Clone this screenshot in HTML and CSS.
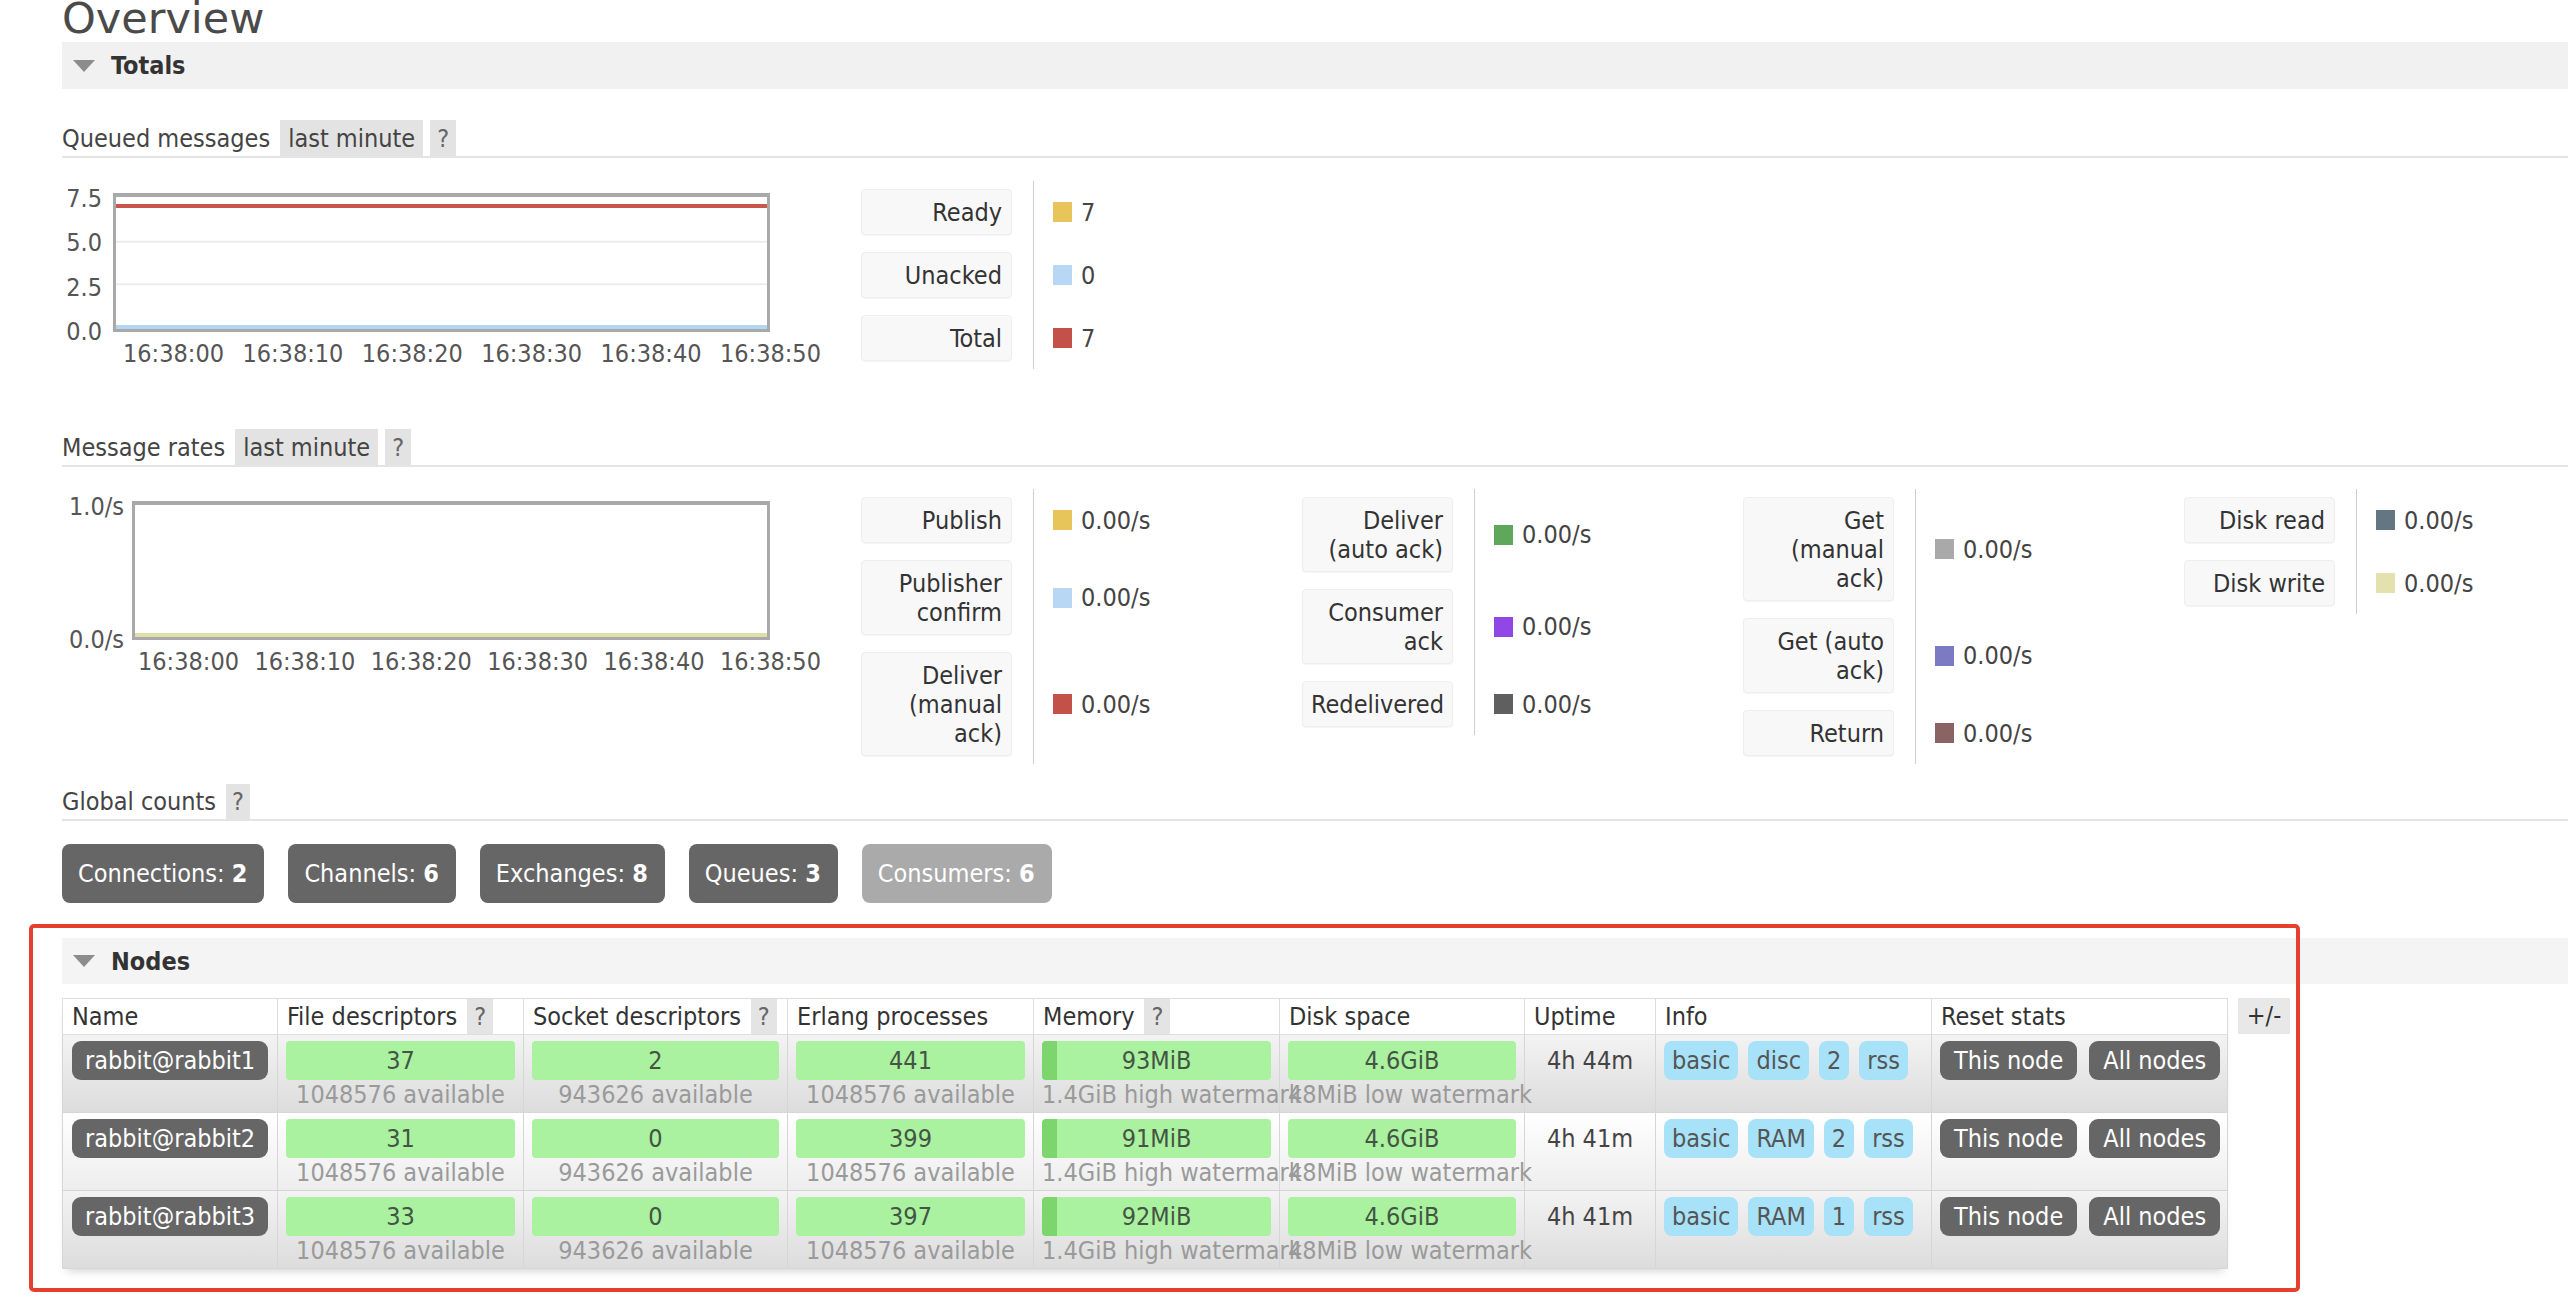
FILE: index.html
```html
<!DOCTYPE html>
<html>
<head>
<meta charset="utf-8">
<title>Overview</title>
<link rel="stylesheet" href="styles.css">
</head>
<body>
<div class="page">
  <h1 class="title">Overview</h1>

  <div class="section-bar totals-bar">
    <svg class="tri" viewBox="0 0 22 12"><polygon points="0,0 22,0 11,12"/></svg>
    <span>Totals</span>
  </div>

  <div class="subhead sh1"><span>Queued messages</span><span class="tag">last minute</span><span class="tag q">?</span></div>

  <div class="chart-row row1">
    <div class="chart c1">
      <div class="yaxis"><span>7.5</span><span>5.0</span><span>2.5</span><span>0.0</span></div>
      <div class="plotcol">
        <div class="plot">
          <svg viewBox="0 0 651 133" preserveAspectRatio="none">
            <line x1="0" y1="45" x2="651" y2="45" stroke="#ededed" stroke-width="2"/>
            <line x1="0" y1="88" x2="651" y2="88" stroke="#ededed" stroke-width="2"/>
            <line x1="0" y1="9" x2="651" y2="9" stroke="#edc240" stroke-width="4"/>
            <line x1="0" y1="9" x2="651" y2="9" stroke="#c9564b" stroke-width="4"/>
            <line x1="0" y1="131" x2="651" y2="131" stroke="#b3d6f2" stroke-width="4"/>
          </svg>
        </div>
        <div class="xaxis"><span>16:38:00</span><span>16:38:10</span><span>16:38:20</span><span>16:38:30</span><span>16:38:40</span><span>16:38:50</span></div>
      </div>
    </div>
    <div class="legend">
      <div class="sep s3"></div>
      <div class="lbl">Ready</div><div class="val"><i class="sw c-yellow"></i>7</div>
      <div class="lbl">Unacked</div><div class="val"><i class="sw c-lblue"></i>0</div>
      <div class="lbl">Total</div><div class="val"><i class="sw c-red"></i>7</div>
    </div>
  </div>

  <div class="subhead sh2"><span>Message rates</span><span class="tag">last minute</span><span class="tag q">?</span></div>

  <div class="chart-row row2">
    <div class="chart c2">
      <div class="yaxis"><span>1.0/s</span><span>0.0/s</span></div>
      <div class="plotcol">
        <div class="plot">
          <svg viewBox="0 0 632 133" preserveAspectRatio="none">
            <line x1="0" y1="131" x2="632" y2="131" stroke="#dfdfa9" stroke-width="4"/>
          </svg>
        </div>
        <div class="xaxis"><span>16:38:00</span><span>16:38:10</span><span>16:38:20</span><span>16:38:30</span><span>16:38:40</span><span>16:38:50</span></div>
      </div>
    </div>
    <div class="legend">
      <div class="sep s3"></div>
      <div class="lbl">Publish</div><div class="val"><i class="sw c-yellow"></i>0.00/s</div>
      <div class="lbl">Publisher confirm</div><div class="val"><i class="sw c-lblue"></i>0.00/s</div>
      <div class="lbl">Deliver (manual ack)</div><div class="val"><i class="sw c-red"></i>0.00/s</div>
    </div>
    <div class="legend">
      <div class="sep s3"></div>
      <div class="lbl">Deliver (auto ack)</div><div class="val"><i class="sw c-green"></i>0.00/s</div>
      <div class="lbl">Consumer ack</div><div class="val"><i class="sw c-purple"></i>0.00/s</div>
      <div class="lbl">Redelivered</div><div class="val"><i class="sw c-dgray"></i>0.00/s</div>
    </div>
    <div class="legend">
      <div class="sep s3"></div>
      <div class="lbl">Get (manual ack)</div><div class="val"><i class="sw c-gray"></i>0.00/s</div>
      <div class="lbl">Get (auto ack)</div><div class="val"><i class="sw c-violet"></i>0.00/s</div>
      <div class="lbl">Return</div><div class="val"><i class="sw c-brown"></i>0.00/s</div>
    </div>
    <div class="legend">
      <div class="sep s2"></div>
      <div class="lbl">Disk read</div><div class="val"><i class="sw c-slate"></i>0.00/s</div>
      <div class="lbl">Disk write</div><div class="val"><i class="sw c-khaki"></i>0.00/s</div>
    </div>
  </div>

  <div class="subhead sh3"><span>Global counts</span><span class="tag q">?</span></div>

  <div class="counts">
    <span class="count">Connections:&nbsp;<b>2</b></span>
    <span class="count">Channels:&nbsp;<b>6</b></span>
    <span class="count">Exchanges:&nbsp;<b>8</b></span>
    <span class="count">Queues:&nbsp;<b>3</b></span>
    <span class="count light">Consumers:&nbsp;<b>6</b></span>
  </div>

  <div class="section-bar nodes-bar">
    <svg class="tri" viewBox="0 0 22 12"><polygon points="0,0 22,0 11,12"/></svg>
    <span>Nodes</span>
  </div>

  <div class="nodes">
    <table class="list">
      <colgroup>
        <col class="w-name"><col class="w-fd"><col class="w-sd"><col class="w-ep"><col class="w-mem"><col class="w-disk"><col class="w-up"><col class="w-info"><col class="w-reset">
      </colgroup>
      <thead>
        <tr>
          <th>Name</th>
          <th>File descriptors<span class="hq">?</span></th>
          <th>Socket descriptors<span class="hq">?</span></th>
          <th>Erlang processes</th>
          <th>Memory<span class="hq">?</span></th>
          <th>Disk space</th>
          <th>Uptime</th>
          <th>Info</th>
          <th>Reset stats</th>
        </tr>
      </thead>
      <tbody>
        <tr class="alt1">
          <td class="name"><span class="pill">rabbit@rabbit1</span></td>
          <td><div class="bar">37</div><div class="sub">1048576 available</div></td>
          <td><div class="bar">2</div><div class="sub">943626 available</div></td>
          <td><div class="bar">441</div><div class="sub">1048576 available</div></td>
          <td><div class="bar mem">93MiB</div><div class="sub">1.4GiB high watermark</div></td>
          <td><div class="bar">4.6GiB</div><div class="sub">48MiB low watermark</div></td>
          <td class="up">4h 44m</td>
          <td><div class="badges"><span>basic</span><span>disc</span><span>2</span><span>rss</span></div></td>
          <td><div class="btns"><span>This node</span><span>All nodes</span></div></td>
        </tr>
        <tr class="alt2">
          <td class="name"><span class="pill">rabbit@rabbit2</span></td>
          <td><div class="bar">31</div><div class="sub">1048576 available</div></td>
          <td><div class="bar">0</div><div class="sub">943626 available</div></td>
          <td><div class="bar">399</div><div class="sub">1048576 available</div></td>
          <td><div class="bar mem">91MiB</div><div class="sub">1.4GiB high watermark</div></td>
          <td><div class="bar">4.6GiB</div><div class="sub">48MiB low watermark</div></td>
          <td class="up">4h 41m</td>
          <td><div class="badges"><span>basic</span><span>RAM</span><span>2</span><span>rss</span></div></td>
          <td><div class="btns"><span>This node</span><span>All nodes</span></div></td>
        </tr>
        <tr class="alt1">
          <td class="name"><span class="pill">rabbit@rabbit3</span></td>
          <td><div class="bar">33</div><div class="sub">1048576 available</div></td>
          <td><div class="bar">0</div><div class="sub">943626 available</div></td>
          <td><div class="bar">397</div><div class="sub">1048576 available</div></td>
          <td><div class="bar mem">92MiB</div><div class="sub">1.4GiB high watermark</div></td>
          <td><div class="bar">4.6GiB</div><div class="sub">48MiB low watermark</div></td>
          <td class="up">4h 41m</td>
          <td><div class="badges"><span>basic</span><span>RAM</span><span>1</span><span>rss</span></div></td>
          <td><div class="btns"><span>This node</span><span>All nodes</span></div></td>
        </tr>
      </tbody>
    </table>
    <div class="plusminus">+/-</div>
  </div>

  <div class="annot"></div>
</div>
</body>
</html>
```

FILE: styles.css
```css
* { box-sizing: border-box; }

html, body {
  margin: 0;
  background: #fff;
}

body {
  font-family: "DejaVu Sans Condensed", "DejaVu Sans", sans-serif;
  font-stretch: condensed;
  font-size: 25px;
  line-height: 29px;
  color: #444;
}

.page {
  position: relative;
  padding-left: 62px;
  height: 1296px;
  overflow: hidden;
  display: flow-root;
}

.title {
  font-family: "DejaVu Sans", sans-serif;
  font-stretch: normal;
  font-weight: normal;
  font-size: 43px;
  line-height: 36px;
  height: 36px;
  margin: 0 0 6px;
  color: #4a4a4a;
}

.section-bar {
  display: flex;
  align-items: center;
  background: #f1f1f1;
  padding-left: 11px;
  font-weight: bold;
  color: #333;
}

.totals-bar { height: 47px; }

.nodes-bar {
  height: 46px;
  margin-top: 35px;
  background: #f4f4f4;
}

.tri {
  width: 22px;
  height: 12px;
  margin-right: 16px;
  fill: #8c8c8c;
}

.subhead {
  display: flex;
  align-items: center;
  height: 38px;
  border-bottom: 2px solid #e4e4e4;
  color: #444;
}

.sh1 { margin-top: 31px; }
.sh2 { margin-top: 60px; }
.sh3 { margin-top: 20px; height: 37px; }

.tag {
  align-self: stretch;
  display: flex;
  align-items: center;
  background: #e3e3e3;
  padding: 0 8px;
  margin-left: 10px;
}

.tag.q {
  margin-left: 7px;
  padding: 0 7px;
  color: #666;
}

.sh3 .tag.q { margin-left: 10px; padding: 0 6px; }

/* charts */
.chart-row {
  display: flex;
  align-items: flex-start;
}

.row1 { margin-top: 23px; }
.row2 { margin-top: 22px; }

.chart {
  display: flex;
  align-items: flex-start;
  width: 799px;
  flex: none;
  color: #555;
}

.yaxis {
  display: flex;
  flex-direction: column;
  justify-content: space-between;
  align-items: flex-end;
  margin-top: 3px;
  height: 162px;
  flex: none;
}

.c1 .yaxis { width: 51px; padding-right: 11px; }
.c2 .yaxis { width: 70px; padding-right: 8px; }

.plotcol {
  display: flex;
  flex-direction: column;
  margin-top: 12px;
}

.plot {
  height: 139px;
  border: 3px solid #a9a9a9;
  border-top-width: 4px;
  background: #fff;
}

.plot svg {
  display: block;
  width: 100%;
  height: 100%;
}

.c1 .plot { width: 657px; }
.c2 .plot { width: 638px; }

.xaxis {
  display: flex;
  justify-content: space-between;
  margin-top: 7px;
  white-space: nowrap;
}

.c1 .xaxis { width: 698px; margin-left: 10px; }
.c2 .xaxis { width: 683px; margin-left: 6px; }

/* legends */
.legend {
  display: grid;
  grid-template-columns: 151px 41px auto;
  row-gap: 17px;
  align-items: center;
  padding: 8px 0;
  width: 441px;
  flex: none;
}

.sep {
  grid-column: 2;
  align-self: stretch;
  justify-self: start;
  width: 1px;
  background: #cfcfcf;
  margin: -8px 0 -8px 21px;
}

.s3 { grid-row: 1 / span 3; }
.s2 { grid-row: 1 / span 2; }

.lbl {
  grid-column: 1;
  align-self: start;
  background: #f8f8f8;
  border: 1px solid #eee;
  border-radius: 4px;
  box-shadow: 0 1px 1px rgba(0, 0, 0, 0.04);
  text-align: right;
  padding: 8px 9px 7px 8px;
  color: #333;
}

.val {
  grid-column: 3;
  display: flex;
  align-items: center;
  color: #444;
  white-space: nowrap;
}

.sw {
  display: inline-block;
  width: 19px;
  height: 20px;
  margin-right: 9px;
}

.c-yellow { background: #e8c55a; }
.c-lblue  { background: #b7d7f4; }
.c-red    { background: #c4504a; }
.c-green  { background: #5fa75a; }
.c-purple { background: #9146e6; }
.c-dgray  { background: #5f5f5f; }
.c-gray   { background: #a9a9a9; }
.c-violet { background: #7d7ac4; }
.c-brown  { background: #8a6462; }
.c-slate  { background: #647681; }
.c-khaki  { background: #e3e1ae; }

/* global counts */
.counts {
  display: flex;
  gap: 24px;
  margin-top: 23px;
}

.count {
  display: flex;
  align-items: center;
  height: 59px;
  padding: 0 17px 0 16px;
  background: #666;
  color: #fff;
  border-radius: 8px;
  white-space: nowrap;
}

.count.light { background: #aaa; }

/* nodes table */
.nodes {
  display: flex;
  align-items: flex-start;
  margin-top: 14px;
}

.list {
  width: 2165px;
  table-layout: fixed;
  border-collapse: collapse;
  flex: none;
  box-shadow: 0 7px 9px -5px rgba(0, 0, 0, 0.18);
}

.w-name  { width: 215px; }
.w-fd    { width: 246px; }
.w-sd    { width: 264px; }
.w-ep    { width: 246px; }
.w-mem   { width: 246px; }
.w-disk  { width: 245px; }
.w-up    { width: 131px; }
.w-info  { width: 276px; }
.w-reset { width: 296px; }

.list th {
  height: 36px;
  padding: 0 0 0 9px;
  text-align: left;
  font-weight: normal;
  color: #333;
  background: #fff;
  border: 1px solid #ddd;
  line-height: 35px;
  white-space: nowrap;
  vertical-align: top;
}

.hq {
  display: inline-block;
  background: #e4e4e4;
  color: #666;
  padding: 0 7px;
  margin-left: 10px;
  line-height: 35px;
  vertical-align: top;
}

.list td {
  height: 78px;
  padding: 6px 8px 0;
  vertical-align: top;
  border: 1px solid #d6d6d6;
}

.list td.name { padding-left: 9px; }

.alt1 { background: linear-gradient(#f3f3f3, #dcdcdc); }
.alt2 { background: linear-gradient(#ffffff, #ededed); }

.pill {
  display: inline-block;
  height: 39px;
  line-height: 39px;
  padding: 0 13px;
  background: #666;
  color: #fff;
  border-radius: 9px;
  white-space: nowrap;
}

.bar {
  height: 39px;
  line-height: 39px;
  text-align: center;
  background: #aaf1a0;
  border-radius: 4px;
  color: #454;
}

.bar.mem {
  background: linear-gradient(to right, #7dd56e 0, #7dd56e 15px, #aaf1a0 15px);
}

.sub {
  text-align: center;
  color: #9a9a9a;
  white-space: nowrap;
  line-height: 29px;
}

.list td.up {
  text-align: center;
  line-height: 39px;
  color: #444;
  white-space: nowrap;
}

.badges, .btns {
  display: flex;
  white-space: nowrap;
}

.badges { gap: 10px; }
.btns { gap: 12px; }

.badges span {
  height: 39px;
  line-height: 39px;
  padding: 0 8px;
  background: #a8e2f8;
  border-radius: 8px;
  color: #555;
}

.btns span {
  height: 39px;
  line-height: 39px;
  padding: 0 14px;
  background: #666;
  color: #fff;
  border-radius: 9px;
}

.plusminus {
  margin-left: 10px;
  width: 52px;
  height: 36px;
  line-height: 36px;
  text-align: center;
  background: #e8e8e8;
  color: #333;
  flex: none;
}

/* red annotation frame drawn over the Nodes section */
.annot {
  position: absolute;
  left: 29px;
  top: 924px;
  width: 2271px;
  height: 368px;
  border: 4px solid #e5402f;
  border-radius: 5px;
  pointer-events: none;
}
```
